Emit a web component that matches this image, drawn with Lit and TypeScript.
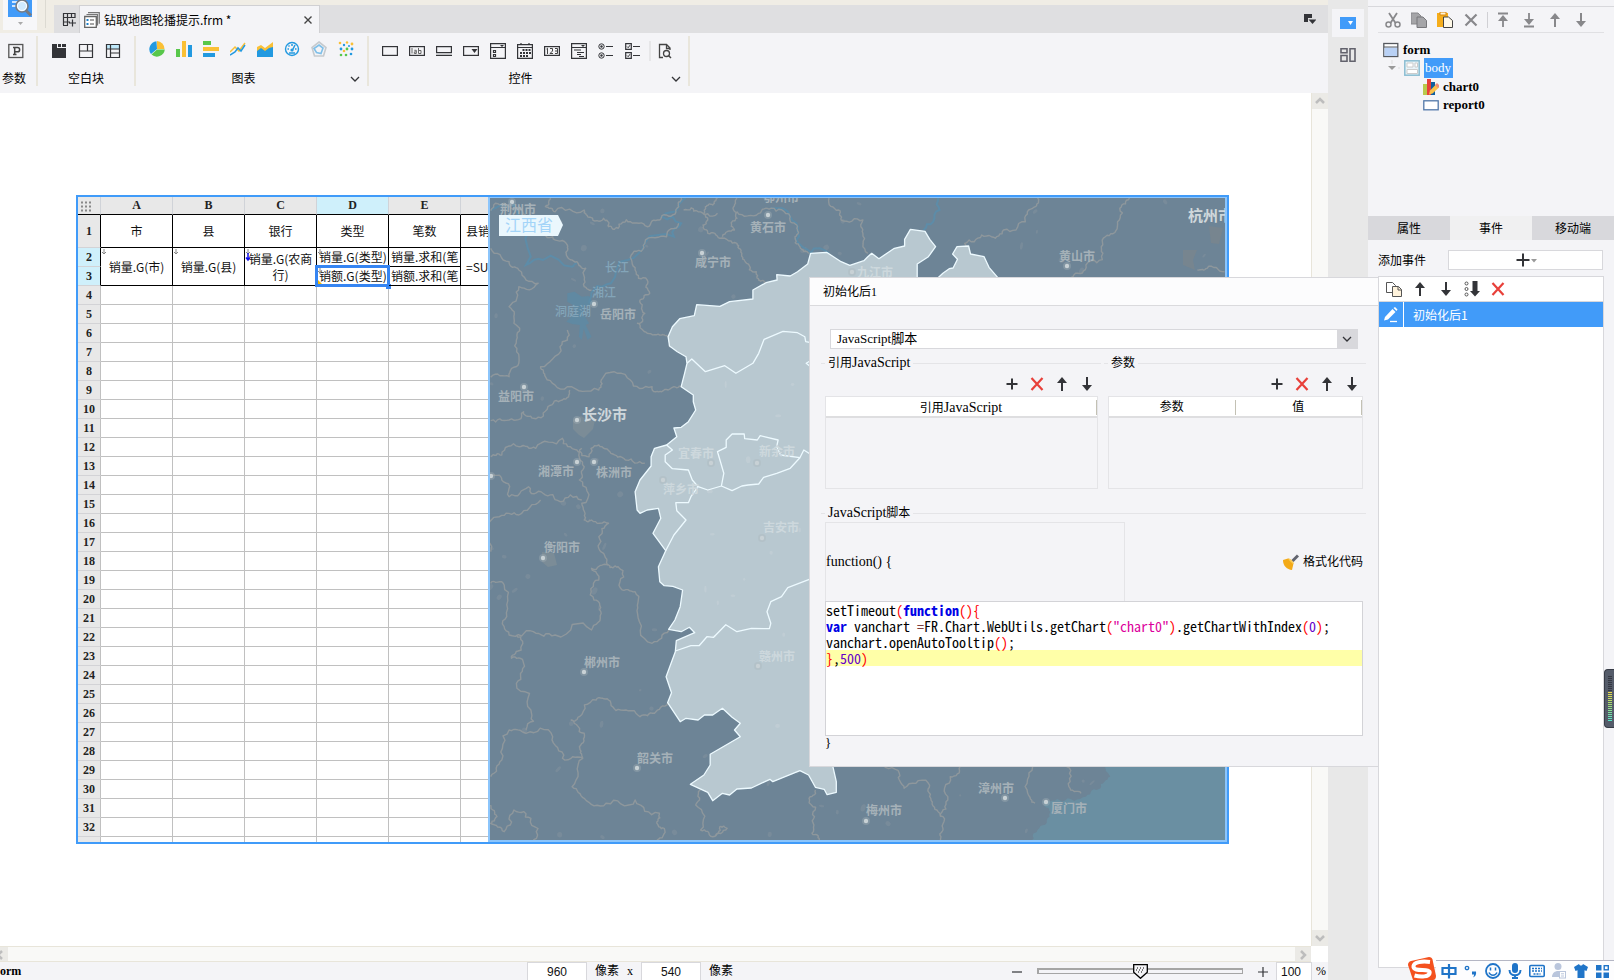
import { LitElement, html, svg, css, nothing } from "lit";
import { customElement } from "lit/decorators.js";
import { classMap } from "lit/directives/class-map.js";

/* ---------- shared icons ---------- */
const icon = (body: unknown, w = 16, h = 16) =>
  html`<svg width=${w} height=${h} viewBox="0 0 ${w} ${h}" fill="none" aria-hidden="true">${body}</svg>`;

const DARK = "#333438";
const up = (c = DARK) => svg`<path d="M8 3V15" stroke=${c} stroke-width="2"/><path d="M8 1l5 6H3z" fill=${c}/>`;
const down = (c = DARK) => svg`<path d="M8 1V12" stroke=${c} stroke-width="2"/><path d="M8 15l5-6H3z" fill=${c}/>`;
const plus = svg`<path d="M8 2.500V13.500M2.500 8H13.500" stroke=${DARK} stroke-width="2"/>`;
const cross = svg`<path d="M2.500 2l11 12M13.500 2l-11 12" stroke="#e8403a" stroke-width="2.200"/>`;
const chevron = icon(svg`<path d="M1 2l4 4 4-4" stroke="#333438" stroke-width="1.300"/>`, 10, 8);

const paramIcon = svg`<rect x=".8" y="1.500" width="14" height="13" stroke="#555" stroke-width="1.300"/>
  <path d="M5 4.500h4.500a2 2 0 0 1 0 4.300H7M6.700 4.500v7M5 11.500h3.500" stroke="#444" stroke-width="1.500"/>`;

const blockIcons = [
  svg`<path d="M1 1h5v4h9v10H1z" fill=${DARK}/><path d="M7 1h3v3H7zM11 1h4v3h-4z" fill=${DARK}/>`,
  svg`<path d="M1.500 1.500h13v13h-13zM1.500 8h13M9.500 1.500V8" stroke=${DARK} stroke-width="1.200"/>`,
  svg`<rect x="2" y="2" width="12" height="4" fill="#bfe9fb"/><path d="M1.500 1.500h13v13h-13zM1.500 6h13M5.500 1.500v13M5.500 10h9" stroke=${DARK} stroke-width="1.200"/>`,
];

const chartIcons = [
  svg`<path d="M8 8L2 13A8 8 0 0 1 7.500.2z" fill="#2299e0"/><path d="M8 8V0a8 8 0 0 1 7.500 8z" fill="#fac036"/><path d="M8 8.500h7.800A8 8 0 0 1 2.500 13.500z" fill="#58c74b"/>`,
  svg`<path d="M0 8h4v8H0z" fill="#58c74b"/><path d="M6 0h4v16H6z" fill="#fac036"/><path d="M12 4h4v12h-4z" fill="#2299e0"/>`,
  svg`<path d="M0 0h8v4H0z" fill="#58c74b"/><path d="M0 6h16v4H0z" fill="#fac036"/><path d="M0 12h12v4H0z" fill="#2299e0"/>`,
  svg`<path d="M0 11l5-5 4 4 6-8" stroke="#fac036" stroke-width="1.500"/><path d="M0 14l5-3 3-4 3 3 4-6" stroke="#2299e0" stroke-width="1.500"/>`,
  svg`<path d="M0 6l4-2 4 3 8-6v10H0z" fill="#fac036"/><path d="M0 10l4-3 4 3 4-3 4-1v10H0z" fill="#2299e0"/>`,
  svg`<circle cx="8" cy="8" r="6.500" stroke="#2299e0" stroke-width="1.400"/><path d="M8 10l3-6" stroke="#2299e0" stroke-width="1.500"/><path d="M5 12h6M3.500 8h1.500M11 8h1.500M8 3v2M4.500 4.500l1 1" stroke="#2299e0" stroke-width="1.500"/><circle cx="8" cy="9" r="1.600" fill="#2299e0"/>`,
  svg`<path d="M8 1l7 5.500L12.500 15h-9L1 6.500z" stroke="#c6cace" stroke-width="1.600"/><path d="M8 4l4 3-2 5.500-4.500-1L3 7.500z" stroke="#7fbfe8" stroke-width="1.600"/>`,
  svg`<g fill="#fac036"><circle cx="2" cy="2" r="1.300"/><circle cx="9" cy="1.500" r="1.200"/><circle cx="14" cy="3" r="1.400"/><circle cx="6" cy="10" r="1.300"/></g><g fill="#2299e0"><circle cx="6" cy="4" r="1.200"/><circle cx="3" cy="8" r="1.400"/><circle cx="14" cy="8" r="1.400"/><circle cx="11" cy="5" r="1"/><circle cx="13" cy="13" r="1.300"/></g><g fill="#58c74b"><circle cx="9" cy="8" r="1.400"/><circle cx="3" cy="14" r="1.300"/><circle cx="8" cy="14" r="1.300"/></g>`,
];

const frame = svg`<rect x=".6" y="3.600" width="14.800" height="8.800" stroke=${DARK} stroke-width="1.200"/>`;
const controlIcons = [
  frame,
  svg`${frame}<path d="M3 5v5.500M5.300 7.300h2v3.200h-2v-1.600h2M9.500 5v5.500H12V7.500H9.500" stroke="#666"/>`,
  svg`<path d="M.6 3.600h14.800v6H.6zM0 12.400h16" stroke=${DARK} stroke-width="1.200"/>`,
  svg`${frame}<path d="M8.500 6h6L11.500 10z" fill=${DARK}/>`,
  svg`<path d="M.6.600h14.800v14.800H.6zM.6 4.500h14.800M3.500 7.500h2v2h-2zM3.500 11.500h2v2h-2z" stroke=${DARK} stroke-width="1.200"/><path d="M10 2h4l-2 2z" fill=${DARK}/>`,
  svg`<path d="M.6 1.600h14.800v13.800H.6zM.6 4.500h14.800M4 0v2M12 0v2" stroke=${DARK} stroke-width="1.200"/><path d="M5.500 7H14M3 10h11M3 13h8" stroke=${DARK} stroke-width="1.800" stroke-dasharray="2 1"/>`,
  svg`${frame}<path d="M2.500 6l1-.8V11M6 5.500h2.500V8L6 10.500h3M11 5.500h2.500v5H11M11 8h2.500" stroke="#444"/>`,
  svg`<path d="M.6.600h14.800v14.800H.6zM.6 4.500h14.800M3 7h7M6 9.500h7M6 11.500h4M8 13.500h5" stroke=${DARK} stroke-width="1.200"/><path d="M10 2h4l-2 2z" fill=${DARK}/>`,
  svg`<circle cx="3.500" cy="3.500" r="2.700" stroke=${DARK}/><circle cx="3.500" cy="12.500" r="2.700" stroke=${DARK}/><circle cx="3.500" cy="3.500" r="1.200" fill=${DARK}/><circle cx="3.500" cy="12.500" r="1.200" fill=${DARK}/><path d="M8 3.500h7M8 12.500h7" stroke=${DARK} stroke-width="1.200"/>`,
  svg`<path d="M.7.700h5.600v5.600H.7zM.7 9.700h5.600v5.600H.7zM8 3.500h7M8 12.500h7" stroke=${DARK} stroke-width="1.200"/><path d="M2 3.500l1.200 1.200L5 2.200M2 12.500l1.200 1.200L5 11.200" stroke=${DARK}/>`,
];
const previewIcon = svg`<path d="M12 7V5L8.500 1.500H1.500v13H5M8.500 1.500v4h4" stroke="#444" stroke-width="1.300"/><circle cx="8.500" cy="10.500" r="3" stroke="#444" stroke-width="1.300"/><path d="M10.500 12.500L13 15" stroke="#444" stroke-width="1.500"/>`;

/* ---------- report sheet ---------- */
type Cell = { t: string; rows?: number; mark?: "down" | "child"; picked?: boolean; wrap?: boolean; left?: boolean; last?: boolean };
const COLS = ["A", "B", "C", "D", "E", ""];
const ROWS: Record<number, Cell[]> = {
  1: [{ t: "市" }, { t: "县" }, { t: "银行" }, { t: "类型" }, { t: "笔数" }, { t: "县销", last: true }],
  2: [
    { t: "销量.G(市)", rows: 2, mark: "down" },
    { t: "销量.G(县)", rows: 2, mark: "down" },
    { t: "销量.G(农商行)", rows: 2, mark: "child", wrap: true },
    { t: "销量.G(类型)", mark: "down" },
    { t: "销量.求和(笔", left: true },
    { t: "=SU", rows: 2, last: true },
  ],
  3: [{ t: "销额.G(类型)", mark: "down", picked: true }, { t: "销额.求和(笔", left: true }],
};

@customElement("report-sheet")
class ReportSheet extends LitElement {
  static styles = css`
    :host { display: block; overflow: hidden; background: #fff; }
    table { border-collapse: separate; border-spacing: 0; table-layout: fixed; width: 455px; }
    .gutter { width: 23px; }
    .col { width: 72px; }
    th { height: 18px; padding: 0; box-sizing: border-box; background: #e8e8e8; color: #222;
      font: bold 12px/17px "Liberation Serif", serif; border-right: 1px solid #d0d3d8; border-bottom: 1px solid #000; }
    tbody th { height: 19px; border-right-color: #c0c0c0; border-bottom-color: #d3d3d6; }
    .on { background: #cff0fb; }
    td { height: 19px; padding: 0; box-sizing: border-box; border-right: 1px solid #c0c0c0; border-bottom: 1px solid #c0c0c0; }
    .filled td { position: relative; border-color: #000; text-align: center; white-space: nowrap; color: #111;
      font: 12px/16px "Noto Sans CJK SC", sans-serif; }
    .filled th { border-right-color: #000; }
    .filled .wrap { white-space: normal; word-break: break-all; }
    .clip { overflow: hidden; padding: 0 2px; }
    .tall td, .tall th { height: 33px; }
    .filled .left, .filled .last { text-align: left; }
    .last .clip { padding-left: 5px; }
    .mark { position: absolute; left: 0; top: 1px; }
    .frame { position: absolute; inset: -2px -2px -2px -2px; border: 3px solid #3685f2; }
    .frame::after { content: ""; position: absolute; right: -4px; bottom: -5px; width: 5px; height: 5px; background: #3685f2; }
    .frame::before { content: ""; position: absolute; left: 0; bottom: 0; border: 2px solid; border-color: transparent transparent #f5b800 #f5b800; }
    svg { display: block; }
  `;

  private mark(kind?: string) {
    if (!kind) return nothing;
    return html`<span class="mark">${icon(svg`<path d="M3 0v5M1 3l2 2 2-2" stroke="#888"/>
      ${kind === "child" ? svg`<path d="M3 4v7M1 8.500l2 2.500 2-2.500" stroke="#1010ee" stroke-width="1.500"/>` : nothing}`, 7, 13)}</span>`;
  }

  render() {
    return html`<table>
      <colgroup><col class="gutter" />${COLS.map(() => html`<col class="col" />`)}</colgroup>
      <thead><tr>
        <th aria-label="全选">${icon(svg`<path d="M3 4.500h11M3 8.500h11M3 12.500h11" stroke="#888" stroke-width="2" stroke-dasharray="2 2"/>`, 22, 16)}</th>
        ${COLS.map((c) => html`<th class=${classMap({ on: c === "D" })}>${c}</th>`)}
      </tr></thead>
      <tbody>${Array.from({ length: 33 }, (_, i) => i + 1).map((n) => html`
        <tr class=${classMap({ filled: n < 4, tall: n === 1 })}>
          <th class=${classMap({ on: n === 2 || n === 3 })}>${n < 33 ? n : nothing}</th>
          ${ROWS[n]
            ? ROWS[n].map((c) => html`<td rowspan=${c.rows ?? 1} class=${classMap({ wrap: !!c.wrap, left: !!c.left, last: !!c.last })}>
                <div class="clip">${c.t}</div>${this.mark(c.mark)}
                ${c.picked ? html`<span class="frame"></span>` : nothing}</td>`)
            : COLS.map(() => html`<td></td>`)}
        </tr>`)}
      </tbody>
    </table>`;
  }
}

/* ---------- map ---------- */
type Pt = [number, number];
const parse = (s: string): Pt[] => s.trim().split(/\s+/).map((p) => p.split(",").map(Number) as Pt);
const toMap = ([x, y]: Pt): Pt => [480 + x / 2.063, 190 + y / 3];
const path = (pts: Pt[]) => "M" + pts.map(([x, y]) => `${x.toFixed(1)} ${y.toFixed(1)}`).join("L");
const line = (s: string) => path(parse(s).map(toMap));

let seed = 7;
const rnd = () => ((seed = (seed * 16807) % 2147483647) / 2147483647);
function rough(s: string, depth = 3): string {
  let pts = parse(s).map(toMap);
  for (let d = 0; d < depth; d++) {
    const next: Pt[] = [pts[0]];
    for (let i = 1; i < pts.length; i++) {
      const [a, b] = [pts[i - 1], pts[i]];
      const k = (rnd() - 0.5) * 0.55;
      next.push([(a[0] + b[0]) / 2 - (b[1] - a[1]) * k, (a[1] + b[1]) / 2 + (b[0] - a[0]) * k], b);
    }
    pts = next;
  }
  return path(pts);
}

const PROVINCE = `902,262 902,222 925,200 940,170 928,148 918,124 888,118 876,148 876,168 855,175 823,206 808,190 800,200 792,212
 763,226 745,215 715,187 682,190 676,222 655,245 640,258 612,254 613,270 590,278 563,300 563,327 515,335 495,349 447,344 442,377
 412,386 397,410 388,440 391,468 407,485 425,500 427,520 422,550 415,590 440,615 440,635 445,660 430,695 415,712 400,714 406,740
 385,765 360,775 353,800 353,828 330,870 320,905 324,960 330,970 345,960 368,955 373,985 357,1030 383,1082 368,1130 371,1175
 380,1187 398,1189 418,1200 413,1250 402,1290 389,1318 415,1325 432,1312 443,1328 405,1352 403,1385 384,1460 395,1508 387,1538
 413,1595 425,1585 450,1590 463,1575 480,1575 500,1555 520,1582 537,1600 525,1620 537,1640 475,1693 475,1725 462,1755 434,1783
 470,1807 480,1832 500,1810 515,1815 530,1797 560,1794 598,1768 604,1775 660,1742 678,1755 692,1792 710,1798 716,1814 735,1807
 735,1775 728,1730 733,1700 900,1500 1100,600`;
const NORTHEAST = "940,270 955,250 968,236 976,234 985,208 975,192 984,170 1008,168 1012,192 1040,200 1050,232 1070,266 1000,400";
const DISTRICTS = [
  "427,520 437,507 465,545 505,527 528,550 563,520 575,490 586,448 625,424 655,428 670,440 672,455 690,460",
  "690,505 673,520 682,530",
  "385,765 397,780 382,795 382,815 397,836 430,840 438,870 450,890 470,900 498,888 503,850 497,820 490,785 508,772 508,750 520,732 545,732 546,746 572,750 578,737 615,750 612,770 620,795 660,803 668,780 690,800",
  "660,803 640,835 612,850 585,862 575,882 553,885 540,888 520,902 498,888",
  "450,890 435,920 430,938 404,938 406,962 425,990 400,1035 383,1082",
  "403,1383 435,1367 452,1367 468,1340 482,1342 507,1304 530,1325 560,1315 597,1316 600,1300 592,1265 600,1235 622,1220 635,1193 690,1162",
];
const BORDERS = [
  "22,62 50,40 60,48 100,80 115,110 150,140 180,165 178,195 200,215 218,235 215,290 230,300",
  "145,24 135,50 155,65 215,60 228,82 255,85 265,110 285,115 310,95 345,110 370,90 385,75 410,50 415,24",
  "490,24 480,45 465,50 470,90 460,105 470,130 495,145 530,160 540,190 550,220 570,245 575,270 590,280",
  "530,24 522,55 530,85 520,95 525,120 500,140",
  "530,65 575,70 600,55 640,80 655,110 650,140 660,170 680,190",
  "720,24 740,60 745,90 790,90 790,130 800,190",
  "1150,24 1140,55 1125,95 1080,120 1055,140 1020,155 1000,160 1000,185",
  "1340,24 1320,55 1315,110 1290,140 1285,190 1250,225 1225,255 1200,262",
  "22,175 60,215 80,240 120,280 80,290 60,350 70,400 75,450 80,520 60,560 22,562",
  "420,60 450,65 490,70", "1480,240 1500,235 1536,245",
  "410,100 385,140 340,160 315,190 320,240 345,270 350,310 330,330 340,370 325,400 345,430 375,435 388,440",
  "180,420 165,470 125,530 135,560 180,590 245,600 255,560 310,570 355,590 375,605 400,590 415,590",
  "22,692 60,690 90,665 110,685 140,650 170,630 185,600",
  "22,800 45,795 80,770 115,775 170,745 200,780 225,800 245,765 270,790 300,810 340,820",
  "210,775 215,830 205,870 210,940 215,990 230,990 265,1000 245,1040 255,1090 265,1125",
  "22,860 45,870 60,920 100,890 130,910 165,935 210,930",
  "22,1085 40,980 80,975 125,930",
  "265,1125 285,1130 290,1195 320,1205 325,1270 355,1360 390,1320",
  "22,1180 50,1185 55,1280 60,1335 110,1325 155,1335 230,1320 250,1270 235,1230 245,1170 230,1135 265,1125",
  "75,1335 85,1380 65,1405 90,1420 75,1480 105,1560 95,1620",
  "22,1760 45,1710 60,1620 95,1630 150,1640 170,1705 212,1705 205,1670 215,1630 188,1590 205,1580 240,1530 265,1530 290,1560 330,1580 360,1570 387,1538",
  "212,1705 190,1790 215,1825 260,1840 320,1830 370,1870 365,1895 380,1915 365,1950",
  "22,1845 35,1880 22,1900 50,1925 70,1860 105,1885 110,1950",
  "455,1800 445,1845 455,1920 480,1940 510,1915 495,1910 480,1940",
  "692,1800 680,1830 690,1880 685,1930 700,1950",
  "820,1730 865,1750 875,1795 925,1780 930,1825 945,1865 955,1915 950,1950",
  "990,1730 970,1760 965,1830 950,1880",
  "1140,1730 1130,1810 1145,1840", "1210,1730 1215,1790 1240,1810",
];
const RIVERS = [
  "22,60 70,45 100,120 95,225 130,210 190,230 200,220",
  "425,24 410,50 375,80 415,100 400,140 340,160 305,210 270,280 235,300 225,340",
  "600,55 640,80 655,125 665,170 682,190 720,190", "945,24 948,60 935,95 915,120",
];
const COAST = "1290,1730 1300,1760 1280,1795 1250,1820 1200,1835 1160,1835 1175,1880 1150,1920 1140,1955";
const OFFSHORE = "1140,1955 1545,1955 1545,1730";
const LAKE = "180,310 195,305 210,320 225,318 235,340 215,350 212,370 225,400 218,405 230,440 222,450 214,415 210,450 204,440 206,405 190,402 178,395 195,370 192,345 180,335";

// name, x, baseline, inside the province
const CITIES: [string, number, number, boolean?][] = [
  ["荆州市", 500, 214], ["鄂州市", 763, 202], ["黄石市", 750, 232], ["咸宁市", 695, 267], ["岳阳市", 600, 319],
  ["九江市", 857, 277, true], ["黄山市", 1059, 261], ["益阳市", 498, 401], ["宜春市", 678, 458, true], ["新余市", 759, 456, true],
  ["湘潭市", 538, 476], ["株洲市", 596, 477], ["萍乡市", 663, 494, true], ["衡阳市", 544, 552], ["吉安市", 763, 532, true],
  ["赣州市", 759, 661, true], ["郴州市", 584, 667], ["韶关市", 637, 763], ["梅州市", 866, 815], ["漳州市", 978, 793], ["厦门市", 1051, 813],
];
const DOTS: Pt[] = [
  [512, 202], [768, 215], [702, 253], [1067, 266], [594, 304], [524, 387], [577, 420], [577, 462], [594, 462], [711, 463], [757, 463],
  [663, 480], [491, 476], [852, 272], [543, 558], [762, 538], [758, 666], [584, 672], [637, 768], [866, 821], [1005, 798], [1046, 802],
];

@customElement("province-map")
class ProvinceMap extends LitElement {
  static styles = css`
    :host { display: block; background: #6d8496; overflow: hidden; }
    svg { display: block; width: 100%; height: 100%; }
    text { font-family: "Noto Sans CJK SC", sans-serif; font-size: 12px; font-weight: 700; fill: #a5b1b8; }
    .major { font-size: 15px; fill: #cfd7db; }
    .water { fill: #83a5b9; font-weight: 500; }
    .inner { fill: #cdd8dd; }
    .tag { font-size: 16px; font-weight: 400; fill: #a3d4f8; }
  `;
  private borders = BORDERS.map((b) => rough(b));
  private rivers = RIVERS.map((r) => rough(r, 2));
  private sea = rough(COAST) + line(OFFSHORE).replace("M", "L");
  private specks = Array.from({ length: 170 }, () => [490 + rnd() * 736, 198 + rnd() * 642, 1 + rnd() * 2, 1 + rnd() * 3, rnd() * 60]);

  render() {
    return html`<svg viewBox="490 198 736 642" preserveAspectRatio="xMinYMin slice" fill="none" role="img" aria-label="江西省地图">
      ${this.specks.map(([x, y, a, b, r]) => svg`<ellipse cx=${x} cy=${y} rx=${a} ry=${b} transform="rotate(${r} ${x} ${y})" fill="#8a979f" opacity=".4"/>`)}
      <path d=${this.sea} fill="#6a8fa2"/>
      <path d=${line(LAKE)} fill="#6089a2"/>
      <path d="M573 420l8-4 8 5 6-1-2 9-9 9-5-3-6-6z" fill="#7b8c97"/><path d="M542 552l12 1 3 12-9 2-6-5z" fill="#7b8c97"/>
      <path d="M1209 226l14 2-4 16-8-1z" fill="#77858f"/><path d="M1183 250h14l-4 10 2 10-12-5z" fill="#77858f"/>
      ${this.rivers.map((d) => svg`<path d=${d} stroke="#5d8ca8" stroke-width="2"/>`)}
      ${this.borders.map((d) => svg`<path d=${d} stroke="#8e979c" stroke-width="1.400" stroke-linejoin="round"/>`)}
      ${[PROVINCE, NORTHEAST].map((p) => svg`<path d=${line(p)} fill="#b8c8d0" stroke="#edfaff" stroke-width="1.300" stroke-linejoin="round"/>`)}
      ${this.specks.filter(([x, y]) => x > 700 && x < 800 && y > 360 && y < 740).map(([x, y, a, b]) => svg`<ellipse cx=${x} cy=${y} rx=${a} ry=${b} fill="#c4d1d7" opacity=".6"/>`)}
      ${DISTRICTS.map((p) => svg`<path d=${line(p)} stroke="#edfaff" stroke-width="1.300" stroke-linejoin="round"/>`)}
      ${DOTS.map(([x, y]) => svg`<circle cx=${x} cy=${y} r="4" fill="#a9b4ba" opacity=".35"/><circle cx=${x} cy=${y} r="2.200" fill="#c8d1d5"/>`)}
      ${CITIES.map(([t, x, y, inner]) => svg`<text class=${inner ? "inner" : ""} x=${x} y=${y}>${t}</text>`)}
      <text class="water" x="605" y="272">长江</text><text class="water" x="592" y="297">湘江</text><text class="water" x="555" y="316">洞庭湖</text>
      <text class="major" x="582" y="420">长沙市</text><text class="major" x="1188" y="221">杭州市</text>
      <path d="M499 215h59l5 10-5 11h-59z" fill="#eaf7fd"/><text class="tag" x="505" y="231">江西省</text>
    </svg>`;
  }
}

/* ---------- event dialog ---------- */
@customElement("event-dialog")
class EventDialog extends LitElement {
  static styles = css`
    :host { display: flex; flex-direction: column; box-sizing: border-box; background: #f4f4f7; border: 1px solid #d8d8dc;
      font: 12px/16px "Liberation Serif", "Noto Sans CJK SC", sans-serif; color: #000; }
    svg { display: block; }
    button { border: 0; padding: 0; background: none; font: inherit; color: inherit; display: flex; align-items: center; }
    .title { margin: 0; font: inherit; height: 28px; display: flex; align-items: center; padding-left: 13px; box-sizing: border-box;
      background: #fcfcfd; border-bottom: 1px solid #dadadd; }
    .body { padding: 23px 12px 0 11px; }
    .en { font-size: 14px; }
    .pick { display: flex; position: relative; margin: 0 8px 0 9px; border: 1px solid #d8d8dc; height: 20px; box-sizing: border-box; background: #fff; }
    .pick select { appearance: none; border: 0; background: none; width: 100%; padding: 0 6px; font: inherit; font-size: 13px; color: #000; }
    .pick .arrow { width: 20px; flex: none; display: grid; place-items: center; background: #d8d8dc; }
    .groups { display: grid; grid-template-columns: 280fr 262fr; gap: 3px; margin-top: 5px; }
    .legend { display: flex; align-items: center; gap: 3px; height: 18px; }
    .legend::before, .legend::after { content: ""; height: 1px; background: #e4e4e7; width: 4px; }
    .legend::after { flex: 1; }
    .inner { margin: 0 3px 0 4px; }
    .tools { display: flex; justify-content: flex-end; align-items: center; gap: 9px; height: 24px; padding-right: 3px; }
    .grid { height: 93px; box-sizing: border-box; border: 1px solid #e4e4e7; }
    table { width: 100%; border-spacing: 0; table-layout: fixed; background: #fff; border-bottom: 2px solid #dedee0; }
    th { font: inherit; padding: 3px 0 1px; height: 15px; text-align: center; }
    th div { border-right: 1px solid #c3c1b4; height: 15px; line-height: 15px; }
    .script { margin-top: 15px; }
    .row { display: flex; justify-content: space-between; height: 79px; align-items: center; }
    .head { width: 300px; height: 79px; box-sizing: border-box; border: 1px solid #e4e4e7; border-bottom: 0; display: flex; align-items: center; font-size: 14px; }
    .format { gap: 4px; }
    .code { margin: 0; height: 135px; box-sizing: border-box; border: 1px solid #d3d3d7; background: #fff; overflow: hidden;
      font: 14px/16px "Noto Sans Mono CJK SC", "Liberation Mono", monospace; outline: 0; }
    .line { height: 16px; white-space: pre; }
    .current { background: #ffffa8; }
    .k { color: #0000e6; font-weight: bold; }
    .p { color: #f00; }
    .s { color: #dc009c; }
    .n { color: #6400c8; }
    .o { color: #804040; }
    .end { font-size: 13px; line-height: 14px; }
  `;
  private tools() {
    return html`<div class="tools">
      <button aria-label="添加">${icon(plus)}</button><button aria-label="删除">${icon(cross)}</button>
      <button aria-label="上移">${icon(up())}</button><button aria-label="下移">${icon(down())}</button></div>`;
  }
  render() {
    return html`
      <h2 class="title">初始化后1</h2>
      <div class="body">
        <div class="pick"><select aria-label="事件类型"><option>JavaScript脚本</option></select><span class="arrow">${chevron}</span></div>
        <div class="groups">
          <section>
            <div class="legend"><span>引用<span class="en">JavaScript</span></span></div>
            <div class="inner">${this.tools()}
              <div class="grid"><table><tr><th><div>引用<span class="en">JavaScript</span></div></th></tr></table></div></div>
          </section>
          <section>
            <div class="legend"><span>参数</span></div>
            <div class="inner">${this.tools()}
              <div class="grid"><table><tr><th><div>参数</div></th><th><div>值</div></th></tr></table></div></div>
          </section>
        </div>
        <section class="script">
          <div class="legend"><span><span class="en">JavaScript</span>脚本</span></div>
          <div class="inner">
            <div class="row"><div class="head">function() {</div>
              <button class="format">${icon(svg`<path d="M15 1.500L9.500 7" stroke="#62656f" stroke-width="3"/><path d="M0 6l5-1.500c2 0 5 2.500 5.500 5L9 16C4 15.500 0 12 0 6z" fill="#f3aa18"/><path d="M6 5l4.500 4.500" stroke="#f9cd5a" stroke-width="1.500"/>`)}格式化代码</button></div>
            <div class="code" role="textbox" aria-label="代码" aria-multiline="true" contenteditable="true" spellcheck="false"
              ><div class="line">setTimeout<span class="p">(</span><span class="k">function</span><span class="p">(){</span></div
              ><div class="line"><span class="k">var</span> vanchart <span class="o">=</span>FR.Chart.WebUtils.getChart<span class="p">(</span><span class="s">"chart0"</span><span class="p">)</span>.getChartWithIndex<span class="p">(</span><span class="n">0</span><span class="p">)</span>;</div
              ><div class="line">vanchart.openAutoTooltip<span class="p">()</span>;</div
              ><div class="line current"><span class="p">}</span>,<span class="n">500</span><span class="p">)</span></div
            ></div>
            <div class="end">}</div>
          </div>
        </section>
      </div>`;
  }
}

/* ---------- right panel ---------- */
const G = "#88888b";
const treeTools: [string, unknown][] = [
  ["剪切", svg`<path d="M4 1l6.500 10M12 1L5.500 11" stroke=${G} stroke-width="1.800"/><circle cx="3.500" cy="12.500" r="2.500" stroke=${G} stroke-width="1.500"/><circle cx="12.500" cy="12.500" r="2.500" stroke=${G} stroke-width="1.500"/>`],
  ["复制", svg`<path d="M0 1h7l3 3v8H0z" fill="#a5a5a8" stroke="#88888b"/><path d="M6 5h6l3.500 3.500V15.500H6z" fill="#a5a5a8" stroke="#77777a"/>`],
  ["粘贴", svg`<path d="M0 1h11v14H0z" fill="#f5ad1b"/><path d="M3 0h6v3H3z" fill="#fff3d5" stroke="#d8860b"/><path d="M6.500 5h5l4 3.500v7h-9z" fill="#fff9e8" stroke="#444"/>`],
  ["删除", svg`<path d="M2.500 2.500l11 11M13.500 2.500l-11 11" stroke=${G} stroke-width="2.200"/>`],
  ["", nothing],
  ["置顶", svg`<path d="M3 1.500h10M8 5v10" stroke=${G} stroke-width="1.800"/><path d="M8 3l5 6H3z" fill=${G}/>`],
  ["置底", svg`<path d="M3 14.500h10M8 1v9" stroke=${G} stroke-width="1.800"/><path d="M8 13l5-6H3z" fill=${G}/>`],
  ["上移", up(G)],
  ["下移", down(G)],
];

@customElement("side-panel")
class SidePanel extends LitElement {
  static styles = css`
    :host { display: flex; flex-direction: column; box-sizing: border-box; background: #f4f4f7; padding-top: 6px;
      font: 12px/16px "Noto Sans CJK SC", sans-serif; color: #000; }
    svg { display: block; }
    button { border: 0; padding: 0; background: none; font: inherit; color: inherit; }
    .tools { display: flex; align-items: center; gap: 10px; border-top: 1px solid #d8d8dc; padding: 5px 10px 4px 17px; height: 16px; }
    .sep { width: 1px; height: 16px; margin: 0 -3px 0 -2px; background: #d0d0d4; }
    .rule { height: 1px; margin: 0 10px; background: #e0e0e3; }
    .tree { list-style: none; margin: 0; padding: 7px 0 0 15px; flex: 0 0 176px; font: bold 13px/16px "Liberation Serif", serif; }
    .node { display: flex; align-items: center; height: 19px; gap: 4px; }
    .node:last-child { height: 17px; }
    .l1 { padding-left: 5px; height: 18px; }
    .l2 { padding-left: 40px; }
    .picked { background: #419bf9; color: #fff; padding: 2px 2px 2px 1px; font-weight: 400; }
    .tabs { display: grid; grid-template-columns: 82fr 82fr 82fr; height: 24px; }
    .tab { background: #d8d8dc; }
    .active { background: #f0f0f1; }
    .add { display: flex; align-items: center; justify-content: space-between; margin: 10px 11px 6px 10px; }
    .add button { width: 155px; height: 20px; box-sizing: border-box; border: 1px solid #d8d8dc; background: #fff; display: flex; justify-content: center; align-items: center; }
    .events { flex: 1; margin: 0 10px 12px 10px; border: 1px solid #d8d8dc; background: #fff; }
    .bar { display: flex; align-items: center; gap: 10px; height: 24px; padding-left: 7px; }
    .event { display: flex; height: 26px; background: #419bf9; color: #fff; align-items: center; border-top: 1px solid #d8d8dc; box-sizing: border-box; }
    .edit { width: 24px; height: 100%; border-right: 1px solid #fff; display: grid; place-items: center; margin-right: 9px; }
  `;
  render() {
    return html`
      <div class="tools">${treeTools.map(([n, b]) => (n ? html`<button aria-label=${n}>${icon(b)}</button>` : html`<span class="sep"></span>`))}</div>
      <div class="rule"></div>
      <ul class="tree">
        <li class="node">${icon(svg`<rect x=".8" y="1.500" width="14" height="13" fill="#fff" stroke="#55585e" stroke-width="1.300"/><rect x="1.500" y="5.500" width="12.600" height="8.500" fill="#b9d1f5"/><path d="M1 5h14" stroke="#55585e"/>`)}form</li>
        <li class="node l1">${icon(svg`<path d="M0 6h8L4 10z" fill="#999"/><path d="M4 0v4M10 8h3" stroke="#ddd"/>`, 12, 16)}${icon(svg`<rect x=".8" y=".8" width="14.400" height="14.400" fill="#e8f3f8" stroke="#8bbdd2" stroke-width="1.500"/><path d="M3 3h6v4H3zM11 3h2.500v4H11zM3 9.500h10.500v4H3z" fill="#fff" stroke="#ccc"/>`)}<span class="picked">body</span></li>
        <li class="node l2">${icon(svg`<path d="M0 5h4v11H0z" fill="#b9c94c"/><path d="M4 0h4v16H4z" fill="#e8403a"/><path d="M8 3h4v13H8z" fill="#0f5f9e"/><path d="M6 15.500l1-4 6-6 3 3-6.500 6z" fill="#fac04a"/><path d="M12 6l2-2 3 3-2 2z" fill="#f08a78"/>`)}chart0</li>
        <li class="node l2">${icon(svg`<rect x=".8" y="3.800" width="14.400" height="9" fill="#fff" stroke="#5077a8" stroke-width="1.300"/>`)}report0</li>
      </ul>
      <div class="tabs" role="tablist">
        <button class="tab" role="tab">属性</button><button class="tab active" role="tab" aria-selected="true">事件</button><button class="tab" role="tab">移动端</button>
      </div>
      <div class="add"><span id="add">添加事件</span><button aria-labelledby="add">${icon(svg`<path d="M8 1.500v13M1.500 8h13" stroke=${DARK} stroke-width="2"/>`)}${icon(svg`<path d="M0 3h6L3 6.500z" fill="#999"/>`, 6, 8)}</button></div>
      <div class="events">
        <div class="bar">
          <button aria-label="复制">${icon(svg`<path d="M.5 1.500h6l3 3v7h-9z" fill="#fff" stroke="#555"/><path d="M6.500 5.500h6l3 3v7h-9z" fill="#fff3dc" stroke="#555"/><path d="M12 5.500v3.500h3.500" stroke="#555"/>`)}</button>
          <button aria-label="上移">${icon(up())}</button><button aria-label="下移">${icon(down())}</button>
          <button aria-label="排序">${icon(svg`<g stroke="#555"><circle cx="2.500" cy="2.500" r="1.500"/><circle cx="2.500" cy="8" r="1.500"/><circle cx="2.500" cy="13.500" r="1.500"/></g><path d="M8.500 0h5v10H16l-5 5.500L6 10h2.500z" fill=${DARK}/>`)}</button>
          <button aria-label="删除">${icon(cross)}</button>
        </div>
        <div class="event"><span class="edit">${icon(svg`<path d="M2 10l7.500-8 3 3L5 12.500l-4 1z" fill="#fff"/><path d="M10.500 1l1.500-1 2.500 2.500-1 1.500z" fill="#fff"/><path d="M7 14.500h7" stroke="#fff" stroke-width="1.300"/>`)}</span>初始化后1</div>
      </div>`;
  }
}

/* ---------- input-method bar ---------- */
const B = "#1f74c8";
const imeIcons = [
  svg`<path d="M1.500 5h13v6h-13zM8 1v14.500" stroke=${B} stroke-width="2.200"/>`,
  svg`<circle cx="4" cy="5" r="1.700" stroke=${B} stroke-width="1.300"/><path d="M9 8.500h4c.5 3-.5 5-3 6 1-1.500 1-2 1-3H9z" fill=${B}/>`,
  svg`<circle cx="8" cy="8" r="7" stroke=${B} stroke-width="1.800"/><path d="M5.500 4.500v3M10.500 4.500v3M4 9.500c1.500 3.500 6.500 3.500 8 0" stroke=${B} stroke-width="1.500"/>`,
  svg`<rect x="5" y="0" width="6" height="10" rx="3" fill=${B}/><path d="M2.500 7c0 7 11 7 11 0M8 12v4M5 15h6" stroke=${B} stroke-width="2"/>`,
  svg`<rect x=".8" y="2.500" width="14.400" height="11" rx="1" stroke=${B} stroke-width="1.600"/><path d="M3 5.500h10M3 8h10M4.500 11h7" stroke=${B} stroke-width="1.400" stroke-dasharray="2 1"/>`,
  svg`<circle cx="7" cy="3.500" r="3.500" fill="#b9c5dc"/><path d="M1 14c0-8 12-8 12 0z" fill="#b9c5dc"/><rect x="8.500" y="8.500" width="6" height="6.500" fill="#fff" stroke="#b9c5dc"/><path d="M10 10.800h3M10 13h3" stroke="#b9c5dc"/>`,
  svg`<path d="M1 4l5-3c1 2 3 2 4 0l5 3-1.500 4-2-.7V15h-7V7.300l-2 .7z" fill=${B}/>`,
  svg`<path d="M1 2h5.500v5.500H1zM1 9.500h5.500V15H1zM8.500 9.500H14V15H8.500z" fill=${B}/><rect x="9.200" y="2.700" width="4.100" height="4.100" stroke=${B} stroke-width="1.400"/>`,
];

@customElement("app-root")
class AppRoot extends LitElement {
  static styles = css`
    :host { display: grid; position: relative; grid-template-columns: minmax(0, 1fr) 40px 246px; height: 100vh; overflow: hidden;
      font: 12px/16px "Noto Sans CJK SC", sans-serif; color: #000; background: #f4f4f7; }
    svg { display: block; flex: none; }
    button { border: 0; padding: 0; background: none; font: inherit; color: inherit; display: block; }
    .main { display: flex; flex-direction: column; min-width: 0; }
    .top { display: flex; height: 33px; background: #f0ede5; flex: none; }
    .finder { width: 34px; height: 30px; margin-left: 3px; background: #f7f7f9; display: flex; flex-direction: column; align-items: center; }
    .vr { width: 1px; height: 28px; margin: 0 8px; background: #dcdad2; }
    .tabs { flex: 1; display: flex; align-items: center; margin-top: 5px; background: #dfdfe1; padding: 0 12px 0 7px; }
    .tab { display: flex; align-items: center; gap: 4px; box-sizing: border-box; width: 241px; height: 28px; margin-left: 2px; padding: 0 6px 0 4px; background: #f4f4f7; border: solid #d0d0d3; border-width: 1px 1px 0; }
    .tab button, .tabs > button { margin-left: auto; }
    .ribbon { display: flex; height: 60px; flex: none; background: #f4f4f7; }
    .group { box-sizing: border-box; margin: 3px 0 7px; border-right: 2px solid #e9e6dc; display: flex; flex-direction: column; justify-content: space-between; position: relative; }
    .icons { display: flex; gap: 11px; padding: 5px 0 0; align-items: center; }
    .name { display: flex; justify-content: center; height: 16px; }
    .more { position: absolute; right: 7px; bottom: 3px; }
    .g1 { width: 38px; } .g1 .icons { padding: 7px 0 0 8px; } .g1 .name { padding-right: 8px; }
    .g2 { width: 98px; } .g2 .icons { padding: 7px 0 0 13px; }
    .g3 { width: 233px; } .g3 .icons { padding-left: 13px; } .g3 .name { padding-right: 16px; }
    .g4 { width: 321px; } .g4 .icons { padding-left: 13px; } .g4 .name { padding-right: 16px; }
    .bar { width: 2px; height: 20px; margin: 0 -4px 0 -3px; background: #e6e6e8; }
    .work { flex: 1; min-height: 0; display: grid; grid-template-columns: minmax(0, 1fr) 17px; grid-template-rows: minmax(0, 1fr) 16px; background: #fff; }
    .canvas { overflow: hidden; padding: 102px 0 0 76px; }
    .form { display: flex; width: 1153px; height: 649px; box-sizing: border-box; border: 2px solid #409bf9; }
    report-sheet { flex: 0 0 410px; }
    province-map { flex: 1; border: solid #8cc5fb; border-width: 1px 2px 2px; }
    .scroll { background: #f9f9f7; display: flex; justify-content: space-between; box-sizing: border-box; }
    .scroll span { background: #ebeae6; display: grid; place-items: center; width: 16px; height: 16px; }
    .vert { flex-direction: column; border-left: 1px solid #e8e5da; }
    .horz { border-top: 1px solid #e8e5da; border-bottom: 1px solid #e8e5da; overflow: hidden; }
    .horz .first { margin-left: -8px; }
    .status { display: flex; align-items: center; height: 18px; flex: none; font: 12px/16px "Liberation Serif", "Noto Sans CJK SC", serif; overflow: hidden; }
    .status input[type="text"] { box-sizing: border-box; width: 60px; height: 20px; margin: 1px 8px -1px 0; padding: 0; border: 1px solid #d8d8dc; text-align: center; font: 12px/16px "Liberation Sans", sans-serif; background: #fff; color: #111; }
    .where { flex: 0 0 527px; font-weight: bold; }
    .by { margin: 0 8px; }
    .zoom { margin-left: auto; display: flex; align-items: center; }
    .status input.pct { width: 36px; margin-right: 4px; margin-left: 8px; padding-right: 6px; }
    .pc { width: 12px; }
    .range { appearance: none; width: 206px; height: 18px; margin: 0 15px; background: linear-gradient(#a5a5a5, #a5a5a5) 0 6px / 100% 2px no-repeat, linear-gradient(#a5a5a5, #a5a5a5) 0 11px / 100% 1px no-repeat, linear-gradient(#a5a5a5, #a5a5a5) 0 6px / 2px 6px no-repeat, linear-gradient(#a5a5a5, #a5a5a5) 100% 6px / 1px 6px no-repeat; }
    .range::-webkit-slider-thumb { appearance: none; width: 15px; height: 16px;
      background: url("data:image/svg+xml,%3Csvg xmlns='http://www.w3.org/2000/svg' width='15' height='16'%3E%3Cpath d='M.7 1.700h13.600v7.600l-6.800 6-6.800-6z' fill='%23f4f4f7' stroke='%23000' stroke-width='1.300'/%3E%3Cpath d='M4 5h8M3 7h9M5 9h6' stroke='%23000' stroke-dasharray='1 2'/%3E%3C/svg%3E") no-repeat; }
    .strip { background: #e8e8e8; display: flex; flex-direction: column; align-items: center; padding-top: 9px; }
    .strip button { width: 32px; height: 28px; display: grid; place-items: center; }
    .strip .on { background: #f4f4f7; margin-bottom: 4px; }
    event-dialog { position: absolute; top: 277px; right: 235px; width: 570px; height: 490px; }
    .ime { position: absolute; right: 0; bottom: 0; display: flex; align-items: flex-end; }
    .keys { display: flex; gap: 6px; height: 19px; padding: 0 3px 0 5px; border-top: 1px solid #b4b6c4; background: #fdfdfe; align-items: center; }
    .meter { position: absolute; right: 0; top: 669px; width: 10px; height: 59px; box-sizing: border-box; border: 1px solid #373c46; border-right: 0; border-radius: 4px 0 0 4px; background: #555c6a; padding: 6px 2px 6px 3px; }
    .meter div { height: 46px; background: repeating-linear-gradient(transparent 0 1px, #535a68 1px 2px), linear-gradient(#353943 0 32%, #f0dc46 34%, #a8e070 60%, #4ee6d0); }
  `;

  private tools(list: unknown[]) {
    return list.map((i) => html`<button>${icon(i)}</button>`);
  }

  render() {
    const arrow = (d: string) => icon(svg`<path d=${d} stroke="#bdbdbd" stroke-width="2.500"/>`, 12, 12);
    return html`
      <div class="main">
        <div class="top">
          <div class="finder">${icon(svg`<path d="M0 0h24v17H0z" fill="#419bf9"/><path d="M4 2h6M4 6h4" stroke="#fff" stroke-width="1.500"/><circle cx="14" cy="6" r="6" fill="#cfeaff" stroke="#777b82" stroke-width="1.600"/><circle cx="14" cy="6" r="4.500" stroke="#fff"/><path d="M18 10.500l5 5" stroke="#777b82" stroke-width="3"/>`, 24, 20)}
            ${icon(svg`<path d="M0 2h5L2.500 5z" fill="#aaa"/>`, 5, 8)}</div>
          <div class="vr"></div>
          <div class="tabs">
            ${icon(svg`<path d="M2 2.500h12M2 6.500h12M2 11h7M2.500 2v12M6.500 2v12M10.500 2v5M14 2v5M2 14.500h5M11.500 8.500v7M8 12h7" stroke=${DARK} stroke-width="1.200"/>`)}
            <div class="tab">${icon(svg`<path d="M4 .7h11.300v11M2.500 2.500h11v11" stroke="#777" stroke-width="1.200"/><path d="M.7 4.500h11.600v10.800H.7z" fill="#fff" stroke="#666" stroke-width="1.300"/><path d="M2.500 7h2v2h-2zM2.500 11h2v2h-2z" fill="#2080c8"/><path d="M6 8h4M6 12h4" stroke="#888" stroke-width="1.500"/>`)}
              <span>钻取地图轮播提示.frm *</span>
              <button aria-label="关闭">${icon(svg`<path d="M1.500 1.500l7 7M8.500 1.500l-7 7" stroke="#444" stroke-width="1.400"/>`, 10, 10)}</button></div>
            <button aria-label="标签列表">${icon(svg`<path d="M0 1h8v4H4v4H0z" fill=${DARK}/><path d="M4.500 6.500h8l-4 4.500z" fill=${DARK}/>`, 12, 12)}</button>
          </div>
        </div>
        <div class="ribbon">
          <div class="group g1"><div class="icons">${this.tools([paramIcon])}</div><div class="name">参数</div></div>
          <div class="group g2"><div class="icons">${this.tools(blockIcons)}</div><div class="name">空白块</div></div>
          <div class="group g3"><div class="icons">${this.tools(chartIcons)}</div><div class="name">图表</div><button class="more" aria-label="更多图表">${chevron}</button></div>
          <div class="group g4"><div class="icons">${this.tools(controlIcons)}<span class="bar"></span>${this.tools([previewIcon])}</div><div class="name">控件</div><button class="more" aria-label="更多控件">${chevron}</button></div>
        </div>
        <div class="work">
          <div class="canvas"><div class="form"><report-sheet></report-sheet><province-map></province-map></div></div>
          <div class="scroll vert"><span>${arrow("M2 8l4-4 4 4")}</span><span>${arrow("M2 4l4 4 4-4")}</span></div>
          <div class="scroll horz"><span class="first">${arrow("M8 2L4 6l4 4")}</span><span>${arrow("M4 2l4 4-4 4")}</span></div>
        </div>
        <div class="status">
          <span class="where">orm</span>
          <input type="text" value="960" aria-label="宽度" /><span>像素</span><span class="by">x</span>
          <input type="text" value="540" aria-label="高度" /><span>像素</span>
          <div class="zoom">
            <button aria-label="缩小">${icon(svg`<path d="M0 7h10" stroke=${DARK} stroke-width="1.200"/>`, 10, 12)}</button>
            <input class="range" type="range" min="0" max="200" value="100" aria-label="缩放" />
            <button aria-label="放大">${icon(svg`<path d="M0 7h10M5 2v10" stroke=${DARK} stroke-width="1.200"/>`, 10, 12)}</button>
            <input class="pct" type="text" value="100" aria-label="缩放比例" /><span class="pc">%</span>
          </div>
        </div>
      </div>
      <nav class="strip">
        <button class="on" aria-label="控件设置">${icon(svg`<path d="M0 2h16v12H0z" fill="#419bf9"/><path d="M8 6h5l-2.500 4z" fill="#fff"/>`)}</button>
        <button aria-label="组件">${icon(svg`<path d="M1 1.800h6v4H1zM1 8.500h6v5.700H1zM10 1.800h5v12.400h-5z" stroke="#62626c" stroke-width="1.600"/>`)}</button>
      </nav>
      <side-panel></side-panel>
      <event-dialog></event-dialog>
      <div class="meter"><div></div></div>
      <div class="ime">
        ${icon(svg`<path d="M3 4l18-4c2 0 3 1 3.500 2.500L28 19c0 2-1 4-3 4H5L0 8c0-2 1-3.500 3-4z" fill="#f4511e"/><path d="M22 5C14 4 6 5 5.500 9s5 4 9 4 8 .5 7 3.500-8 4-15 2" stroke="#fff" stroke-width="4"/>`, 28, 23)}
        <div class="keys">${this.tools(imeIcons)}</div>
      </div>`;
  }
}
